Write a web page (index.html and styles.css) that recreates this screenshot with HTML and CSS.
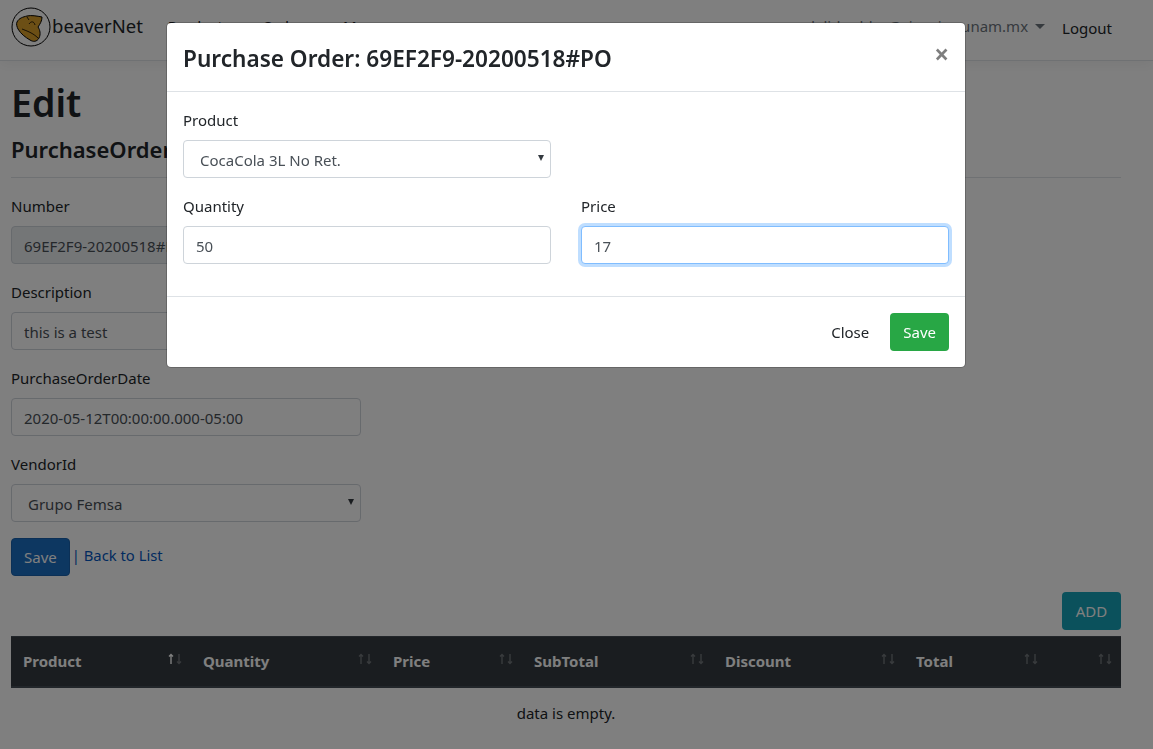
FILE: index.html
```html
<!DOCTYPE html>
<html>
<head>
  <meta charset="utf-8">
  <title>Edit - beaverNet</title>
  <link rel="stylesheet" href="styles.css">
</head>

<body>

<header class="navbar">
  <a class="brand" href="#">
    <svg class="brand-logo" width="40" height="40" viewBox="0 0 40 40">
      <circle cx="20" cy="20" r="19" fill="none" stroke="#000" stroke-width="1"/>
      <path d="M6 15 C8 11 12 10 16 9 C20 8 26 9 31 10 C31 14 29 17 27 20 C29 23 30 27 28 31 C26 35 22 35 19 33 C14 30 10 27 7 22 C6 20 5 17 6 15 Z" fill="#d99e2a" stroke="#000" stroke-width="1"/>
      <path d="M11 22 C16 24 22 26 27 31 M18 17 C20 14 23 14 24 18 M16 10 L18 13" fill="none" stroke="#000" stroke-width="0.8"/>
    </svg>
    <span class="brand-name">beaverNet</span>
  </a>
  <nav class="nav-links">
    <a href="#">Products</a>
    <a href="#">Orders</a>
    <a href="#">Manage</a>
  </nav>
  <div class="nav-right">
    <a class="user-menu" href="#">adalid.robles@ciencias.unam.mx<i class="caret"></i></a>
    <a class="logout" href="#">Logout</a>
  </div>
</header>

<main class="page">
  <h1>Edit</h1>
  <h4>PurchaseOrder</h4>
  <hr>

  <form class="edit-form">
    <div class="form-group">
      <label>Number</label>
      <input class="form-control" type="text" value="69EF2F9-20200518#PO" readonly>
    </div>
    <div class="form-group">
      <label>Description</label>
      <input class="form-control" type="text" value="this is a test">
    </div>
    <div class="form-group">
      <label>PurchaseOrderDate</label>
      <input class="form-control" type="text" value="2020-05-12T00:00:00.000-05:00">
    </div>
    <div class="form-group">
      <label>VendorId</label>
      <div class="select-wrap">
        <select class="form-control">
          <option>Grupo Femsa</option>
        </select>
      </div>
    </div>
    <div class="form-actions">
      <button class="btn btn-primary" type="button">Save</button>
      <span class="back-link">| <a href="#">Back to List</a></span>
    </div>
  </form>

  <div class="table-tools">
    <button class="btn btn-info" type="button">ADD</button>
  </div>

  <table class="lines">
    <thead>
      <tr>
        <th><div class="th-in">Product<svg class="sort" width="15" height="12" viewBox="0 0 15 12"><path class="on" d="M3 11V1.5M1 3.5L3 1.5L5 3.5"/><path d="M11 1V10.5M9 8.5L11 10.5L13 8.5"/></svg></div></th>
        <th><div class="th-in">Quantity<svg class="sort" width="15" height="12" viewBox="0 0 15 12"><path d="M3 11V1.5M1 3.5L3 1.5L5 3.5"/><path d="M11 1V10.5M9 8.5L11 10.5L13 8.5"/></svg></div></th>
        <th><div class="th-in">Price<svg class="sort" width="15" height="12" viewBox="0 0 15 12"><path d="M3 11V1.5M1 3.5L3 1.5L5 3.5"/><path d="M11 1V10.5M9 8.5L11 10.5L13 8.5"/></svg></div></th>
        <th><div class="th-in">SubTotal<svg class="sort" width="15" height="12" viewBox="0 0 15 12"><path d="M3 11V1.5M1 3.5L3 1.5L5 3.5"/><path d="M11 1V10.5M9 8.5L11 10.5L13 8.5"/></svg></div></th>
        <th><div class="th-in">Discount<svg class="sort" width="15" height="12" viewBox="0 0 15 12"><path d="M3 11V1.5M1 3.5L3 1.5L5 3.5"/><path d="M11 1V10.5M9 8.5L11 10.5L13 8.5"/></svg></div></th>
        <th><div class="th-in">Total<svg class="sort" width="15" height="12" viewBox="0 0 15 12"><path d="M3 11V1.5M1 3.5L3 1.5L5 3.5"/><path d="M11 1V10.5M9 8.5L11 10.5L13 8.5"/></svg></div></th>
        <th><div class="th-in"><svg class="sort" width="15" height="12" viewBox="0 0 15 12"><path d="M3 11V1.5M1 3.5L3 1.5L5 3.5"/><path d="M11 1V10.5M9 8.5L11 10.5L13 8.5"/></svg></div></th>
      </tr>
    </thead>
    <tbody>
      <tr><td colspan="7">data is empty.</td></tr>
    </tbody>
  </table>
</main>

<div class="backdrop">
  <div class="modal">
    <div class="modal-header">
      <h5 class="modal-title">Purchase Order: 69EF2F9-20200518#PO</h5>
      <button class="close" type="button">×</button>
    </div>
    <div class="modal-body">
      <div class="modal-row">
        <div class="form-group">
          <label>Product</label>
          <div class="select-wrap">
            <select class="form-control">
              <option>CocaCola 3L No Ret.</option>
            </select>
          </div>
        </div>
      </div>
      <div class="modal-row">
        <div class="form-group">
          <label>Quantity</label>
          <input class="form-control" type="text" value="50">
        </div>
        <div class="form-group">
          <label>Price</label>
          <input class="form-control is-focus" type="text" value="17">
        </div>
      </div>
    </div>
    <div class="modal-footer">
      <button class="btn btn-link" type="button">Close</button>
      <button class="btn btn-success" type="button">Save</button>
    </div>
  </div>
</div>

</body>
</html>
```

FILE: styles.css
```css
* {
  box-sizing: border-box;
}

html, body {
  height: 100%;
}

body {
  margin: 0;
  overflow: hidden;
  font-family: "Noto Sans", sans-serif;
  font-size: 15px;
  line-height: 24px;
  color: #212529;
  background: #fff;
}

a {
  color: #0366d6;
  text-decoration: none;
}

/* navbar */
.navbar {
  display: flex;
  align-items: center;
  height: 61px;
  padding: 0 41px 0 11px;
  border-bottom: 1px solid #dee2e6;
  box-shadow: 0 4px 12px rgba(0, 0, 0, .05);
}

.brand {
  display: flex;
  align-items: center;
  color: #212529;
  font-size: 18.5px;
}

.brand-logo {
  margin-top: -6px;
}

.brand-name {
  margin: -8px 0 0 1px;
}

.nav-links {
  display: flex;
  gap: 32px;
  margin-left: 25px;
}

.nav-links a {
  color: #212529;
  margin-top: -9px;
}

.nav-right {
  display: flex;
  align-items: center;
  margin-left: auto;
}

.user-menu {
  color: #6c757d;
  margin: -9px 1px 0 0;
}

.caret {
  display: inline-block;
  margin-left: 7px;
  vertical-align: 3px;
  border-top: 5px solid #6c757d;
  border-left: 5px solid transparent;
  border-right: 5px solid transparent;
}

.logout {
  color: #212529;
  margin: -4px 0 0 16px;
}

/* page */
.page {
  width: 1110px;
  margin-left: 11px;
}

h1 {
  margin: 18px 0 8px;
  font-size: 37.5px;
  line-height: 48px;
  font-weight: 600;
}

h4 {
  margin: 0;
  font-size: 22px;
  line-height: 29px;
  font-weight: 600;
}

hr {
  margin: 13px 0 16px;
  border: 0;
  border-top: 1px solid #dee2e6;
}

.edit-form {
  width: 350px;
}

.form-group {
  margin-bottom: 16px;
}

label {
  display: block;
  margin-bottom: 8px;
}

.form-control {
  display: block;
  width: 100%;
  height: 38px;
  padding: 7px 12px 5px;
  border: 1px solid #ced4da;
  border-radius: 4px;
  background: #fff;
  color: #495057;
  font: inherit;
  outline: none;
}

.form-control[readonly] {
  background: #e9ecef;
}

.form-control.is-focus {
  border-color: #80bdff;
  box-shadow: 0 0 0 3px rgba(0, 123, 255, .25);
}

.select-wrap {
  position: relative;
}

.select-wrap select {
  appearance: none;
  padding-left: 16px;
}

.select-wrap::after {
  content: "";
  position: absolute;
  right: 7px;
  top: 15px;
  border-top: 6px solid #343a40;
  border-left: 3px solid transparent;
  border-right: 3px solid transparent;
}

.btn {
  height: 38px;
  padding: 0 12px;
  border: 1px solid transparent;
  border-radius: 4px;
  font: inherit;
  cursor: pointer;
}

.btn-primary {
  background: #1b6ec2;
  border-color: #1861ac;
  color: #fff;
}

.btn-info {
  width: 59px;
  padding: 0;
  background: #17a2b8;
  color: #fff;
}

.btn-success {
  background: #28a745;
  color: #fff;
}

.btn-link {
  background: none;
  color: #212529;
}

.form-actions {
  display: flex;
  align-items: flex-start;
  gap: 2px;
}

.back-link {
  color: #0356c0;
  margin-top: 5px;
  font-size: 14.8px;
}

.back-link a {
  color: #0356c0;
}

.table-tools {
  display: flex;
  justify-content: flex-end;
  margin: 16px 0 6px;
}

/* table */
.lines {
  width: 100%;
  table-layout: fixed;
  border-collapse: collapse;
}

.lines th {
  height: 50px;
  padding: 0 8px 0 12px;
  background: #343a40;
  border-top: 1px solid #454d55;
  border-bottom: 2px solid #454d55;
  color: #fff;
  text-align: left;
  font-weight: 700;
}

.lines th:nth-child(1) { width: 180px; }
.lines th:nth-child(2) { width: 190px; }
.lines th:nth-child(3) { width: 141px; }
.lines th:nth-child(4) { width: 191px; }
.lines th:nth-child(5) { width: 191px; }
.lines th:nth-child(6) { width: 143px; }

.th-in {
  display: flex;
  justify-content: space-between;
  align-items: center;
}

.sort {
  margin-left: auto;
  margin-top: -4px;
  fill: none;
  stroke: #fff;
  stroke-width: 1.4;
  opacity: .3;
}

.lines th:first-child .sort {
  opacity: 1;
}

.lines th:first-child .sort path:last-child {
  opacity: .3;
}

.lines td {
  padding: 13px 12px 12px;
  text-align: center;
}

/* modal */
.backdrop {
  position: fixed;
  top: 0;
  right: 0;
  bottom: 0;
  left: 0;
  display: flex;
  justify-content: center;
  align-items: flex-start;
  padding: 22px 21px 0 0;
  background: rgba(0, 0, 0, .5);
}

.modal {
  width: 800px;
  border: 1px solid rgba(0, 0, 0, .2);
  border-radius: 5px;
  background: #fff;
  background-clip: padding-box;
}

.modal-header {
  display: flex;
  justify-content: space-between;
  align-items: flex-start;
  padding: 18px 16px 15px;
  border-bottom: 1px solid #dee2e6;
}

.modal-title {
  margin: 0;
  font-size: 22.6px;
  line-height: 35px;
  font-weight: 600;
}

.close {
  padding: 0;
  border: 0;
  background: none;
  color: #000;
  opacity: .5;
  font-family: inherit;
  font-size: 26px;
  line-height: 26px;
  font-weight: 700;
}

.modal-body {
  padding: 16px 16px 0;
}

.modal-row {
  display: grid;
  grid-template-columns: 368px 368px;
  gap: 30px;
}

.modal-footer {
  display: flex;
  justify-content: flex-end;
  gap: 8px;
  margin-top: 16px;
  padding: 16px;
  border-top: 1px solid #dee2e6;
}
```
